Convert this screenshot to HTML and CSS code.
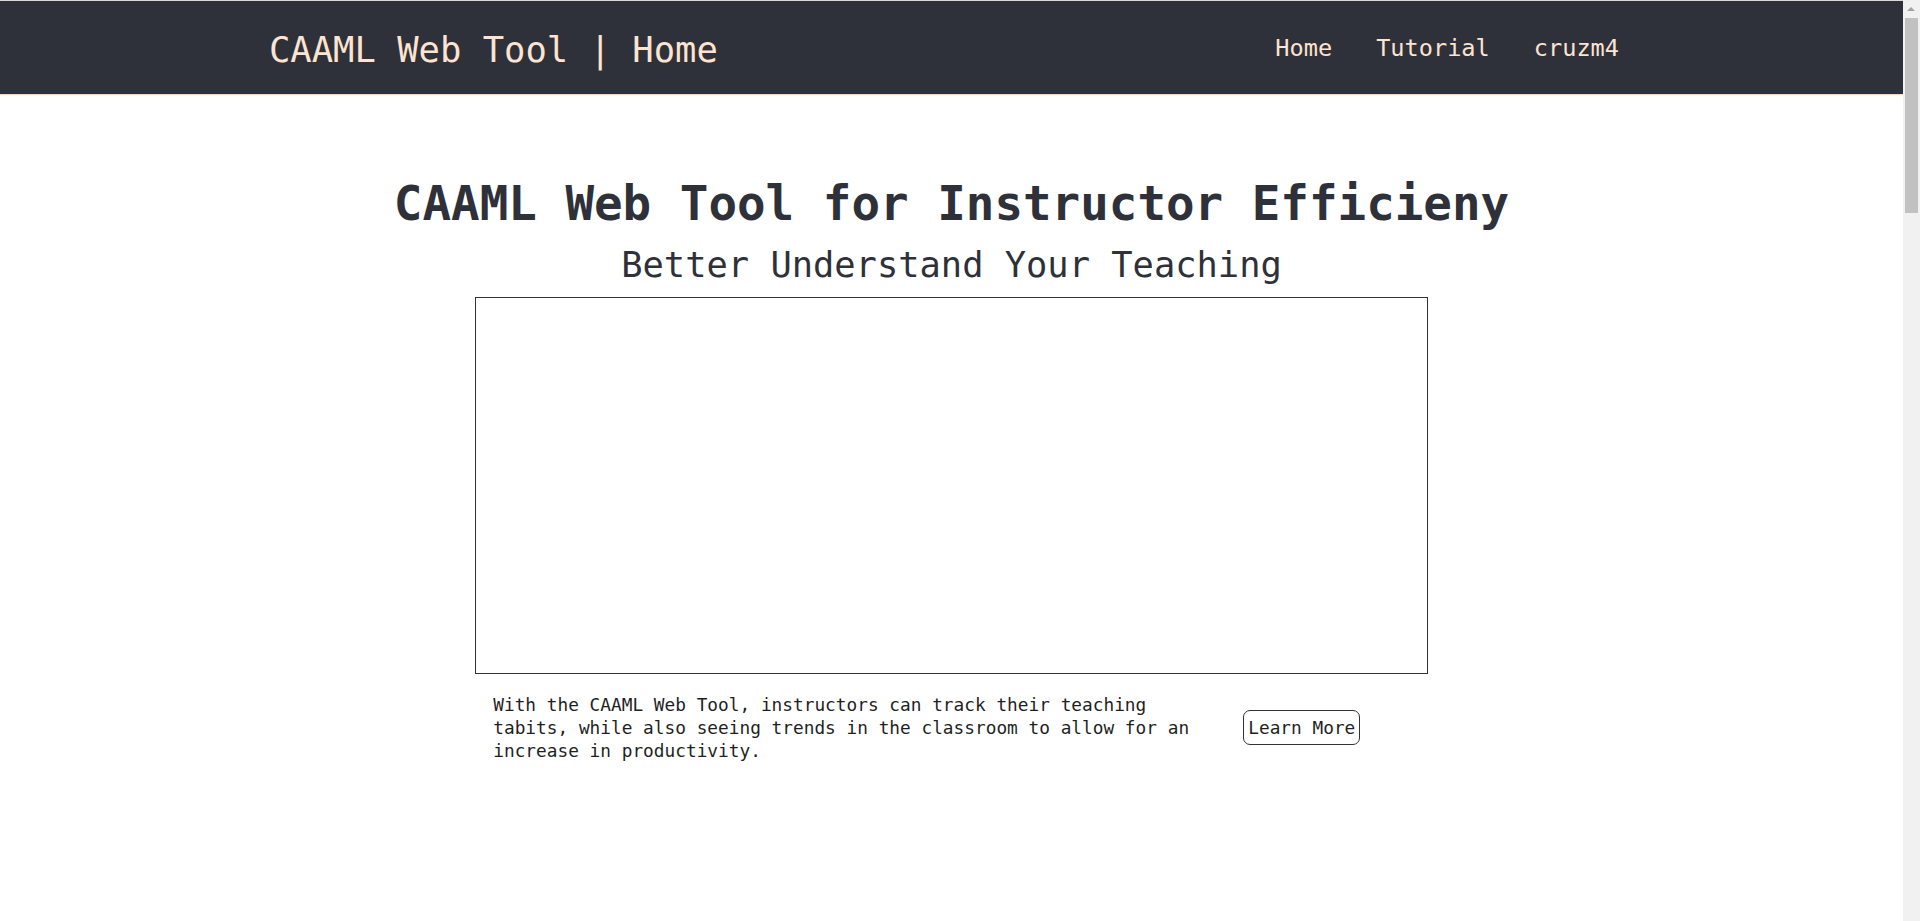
FILE: index.html
```html
<!DOCTYPE html>
<html lang="en">
<head>
<meta charset="utf-8">
<title>CAAML Web Tool | Home</title>
<link rel="stylesheet" href="styles.css">
</head>
<body>
<div class="page">
  <header class="topbar">
    <div class="brand">CAAML Web Tool | Home</div>
    <nav class="nav">
      <a class="nav-link" href="#">Home</a>
      <a class="nav-link" href="#">Tutorial</a>
      <a class="nav-link" href="#">cruzm4</a>
    </nav>
  </header>
  <main class="main">
    <h1 class="title">CAAML Web Tool for Instructor Efficieny</h1>
    <h2 class="subtitle">Better Understand Your Teaching</h2>
    <div class="video-frame"></div>
    <section class="intro">
      <p class="intro-text">With the CAAML Web Tool, instructors can track their teaching tabits, while also seeing trends in the classroom to allow for an increase in productivity.</p>
      <button class="learn-btn" type="button">Learn More</button>
    </section>
  </main>
</div>
<div class="scrollbar" aria-hidden="true">
  <div class="scroll-arrow"></div>
  <div class="scroll-thumb"></div>
</div>
</body>
</html>
```
FILE: styles.css
```css
html, body {
  margin: 0;
  padding: 0;
  background: #ffffff;
}

body {
  font-family: "DejaVu Sans Mono", "Liberation Mono", monospace;
  color: #1f1f1f;
  overflow-x: hidden;
}

.page {
  width: 1903px;
}

.topbar {
  height: 93px;
  background: #2e3139;
  border-top: 1px solid #d9d9d9;
  border-bottom: 1px solid #f0d6c6;
  display: flex;
  align-items: center;
  justify-content: space-between;
  padding: 0 284px 0 269px;
}

.brand {
  font-size: 35.5px;
  color: #fde3d0;
  padding-top: 3px;
  white-space: nowrap;
}

.nav {
  display: flex;
  gap: 44px;
  padding-top: 1px;
}

.nav-link {
  font-size: 23.6px;
  color: #fde3d0;
  text-decoration: none;
}

.main {
  display: flex;
  flex-direction: column;
  align-items: center;
  padding-bottom: 120px;
}

.title {
  margin: 81px 0 0;
  font-size: 47.5px;
  line-height: 56px;
  font-weight: bold;
  color: #2e3139;
  text-align: center;
}

.subtitle {
  margin: 12px 0 0;
  font-size: 35.4px;
  line-height: 42px;
  font-weight: normal;
  color: #2e3139;
  text-align: center;
}

.video-frame {
  box-sizing: content-box;
  width: 50%;
  height: 375px;
  border: 1px solid #333333;
  margin-top: 11px;
}

.intro {
  box-sizing: border-box;
  width: calc(50% + 2px);
  margin-top: 19px;
  padding-left: 18.5px;
  display: flex;
  align-items: center;
}

.intro-text {
  flex: 0 0 720px;
  margin: 0;
  font-size: 17.8px;
  line-height: 23.2px;
  color: #1f1f1f;
}

.learn-btn {
  margin-left: 30px;
  font-family: "DejaVu Sans Mono", "Liberation Mono", monospace;
  font-size: 17.8px;
  line-height: 21px;
  padding: 6px 4px;
  border: 1px solid #333333;
  border-radius: 7px;
  background: #ffffff;
  color: #1f1f1f;
}

.scrollbar {
  position: fixed;
  top: 0;
  right: 0;
  width: 17px;
  height: 100vh;
  background: #f1f1f1;
}

.scroll-arrow {
  position: absolute;
  top: 7px;
  left: 4px;
  width: 0;
  height: 0;
  border-left: 4px solid transparent;
  border-right: 4px solid transparent;
  border-bottom: 4px solid #a3a3a3;
}

.scroll-thumb {
  position: absolute;
  top: 18px;
  left: 2px;
  width: 13px;
  height: 195px;
  background: #c1c1c1;
}
```
